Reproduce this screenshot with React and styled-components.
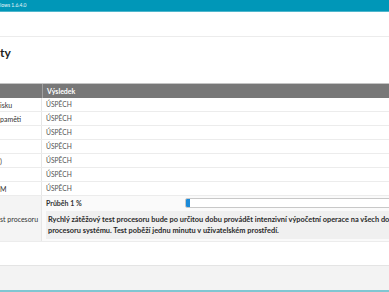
import React from "react";
import styled, { createGlobalStyle } from "styled-components";

const rows = [
  { label: "isku", result: "ÚSPĚCH" },
  { label: "paměti", result: "ÚSPĚCH" },
  { label: "", result: "ÚSPĚCH" },
  { label: "", result: "ÚSPĚCH" },
  { label: ")", result: "ÚSPĚCH" },
  { label: "", result: "ÚSPĚCH" },
  { label: "M", result: "ÚSPĚCH" },
];

export default function App() {
  return (
    <>
      <GlobalStyle />
      <Window>
        <TitleBar>lows 1.6.4.0</TitleBar>
        <Toolbar />
        <Heading>ty</Heading>
        <Table>
          <HeadRow>
            <HeadCell />
            <HeadCell>Výsledek</HeadCell>
          </HeadRow>
          {rows.map((row, i) => (
            <Row key={i}>
              <LabelCell>{row.label}</LabelCell>
              <ResultCell>{row.result}</ResultCell>
            </Row>
          ))}
          <Row active>
            <LabelCell active>st procesoru</LabelCell>
            <RunningCell>
              <ProgressLine>
                <ProgressLabel>Průběh 1 %</ProgressLabel>
                <ProgressBar>
                  <ProgressFill style={{ width: "1%" }} />
                </ProgressBar>
              </ProgressLine>
              <Description>
                Rychlý zátěžový test procesoru bude po určitou dobu provádět
                intenzivní výpočetní operace na všech dostupných jádrech
                <br />
                procesoru systému. Test poběží jednu minutu v uživatelském
                prostředí.
              </Description>
            </RunningCell>
          </Row>
        </Table>
        <Spacer />
        <Footer />
      </Window>
    </>
  );
}

const GlobalStyle = createGlobalStyle`
  html, body {
    margin: 0;
    padding: 0;
    background: #fff;
  }
  body {
    font-family: "Lato", "Liberation Sans", sans-serif;
  }
`;

const Window = styled.div`
  width: 389px;
  height: 292px;
  overflow: hidden;
  display: flex;
  flex-direction: column;
  background: #fff;
`;

const TitleBar = styled.div`
  height: 11px;
  flex-shrink: 0;
  background: #0097b8;
  border-bottom: 1px solid #4fb6cc;
  color: #e8f6fa;
  font-size: 5px;
  line-height: 11px;
  white-space: nowrap;
`;

const Toolbar = styled.div`
  height: 24px;
  flex-shrink: 0;
  border-bottom: 1px solid #ececec;
`;

const Heading = styled.h1`
  margin: 0;
  height: 46px;
  flex-shrink: 0;
  padding-top: 8px;
  box-sizing: border-box;
  font-size: 12px;
  font-weight: 700;
  color: #1e1e1e;
  line-height: 16px;
`;

const Table = styled.div`
  width: 600px;
  flex-shrink: 0;
  display: flex;
  flex-direction: column;
`;

const HeadRow = styled.div`
  display: grid;
  grid-template-columns: 42px 1fr;
  height: 14px;
  background: #787878;
  border-top: 1px solid #c4c4c4;
`;

const HeadCell = styled.div`
  padding-left: 4px;
  color: #fff;
  font-size: 7px;
  font-weight: 700;
  line-height: 14px;
  & + & {
    border-left: 1px solid #a0a0a0;
  }
`;

const Row = styled.div`
  display: grid;
  grid-template-columns: 42px 1fr;
  min-height: 13px;
  border-bottom: 1px solid #ececec;
  background: ${(p) => (p.active ? "#fafafa" : "#fff")};
`;

const LabelCell = styled.div`
  display: flex;
  align-items: center;
  overflow: hidden;
  white-space: nowrap;
  color: #333;
  font-size: 7px;
  background: ${(p) => (p.active ? "#f4f4f4" : "transparent")};
  border-right: 1px solid #e6e6e6;
`;

const ResultCell = styled.div`
  padding-left: 4px;
  color: #555;
  font-size: 6.7px;
  line-height: 13px;
`;

const RunningCell = styled.div`
  padding: 2px 0 2px 4px;
  display: flex;
  flex-direction: column;
  gap: 4px;
`;

const ProgressLine = styled.div`
  display: flex;
  align-items: center;
  height: 9px;
`;

const ProgressLabel = styled.span`
  width: 139px;
  flex-shrink: 0;
  color: #333;
  font-size: 7px;
  font-weight: 700;
`;

const ProgressBar = styled.div`
  flex: 1;
  height: 8px;
  border: 1px solid #c8c8c8;
  border-radius: 2px;
  background: #fff;
  overflow: hidden;
`;

const ProgressFill = styled.div`
  min-width: 3px;
  height: 100%;
  background: #1b8ad8;
`;

const Description = styled.div`
  background: #f0f0f0;
  padding: 3px 2px;
  color: #2a2a2a;
  font-size: 7.4px;
  font-weight: 700;
  line-height: 11px;
  white-space: nowrap;
`;

const Spacer = styled.div`
  height: 23px;
  flex-shrink: 0;
  border-bottom: 1px solid #e4e4e4;
`;

const Footer = styled.div`
  flex: 1;
  background: #f3f3f3;
  border-bottom: 2px solid #80c6d2;
`;
